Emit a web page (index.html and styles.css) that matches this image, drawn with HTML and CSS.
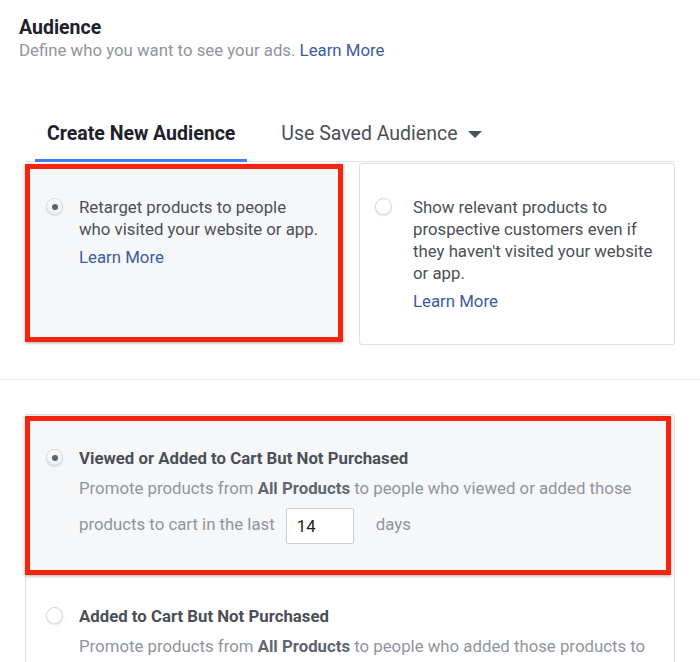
FILE: index.html
```html
<!DOCTYPE html>
<html lang="en">
<head>
<meta charset="utf-8">
<title>Audience</title>
<link rel="stylesheet" href="styles.css">
</head>
<body>
<header class="header">
  <h1 class="title">Audience</h1>
  <p class="subtitle">Define who you want to see your ads. <a class="link" href="#">Learn More</a></p>
</header>

<nav class="tabs">
  <div class="tab tab-active">Create New Audience</div>
  <div class="tab">Use Saved Audience <span class="caret"></span></div>
</nav>

<div class="cards">
  <div class="card card-selected">
    <span class="radio radio-on"></span>
    <div class="card-text">
      <p>Retarget products to people who visited your website or app.</p>
      <a class="link card-link" href="#">Learn More</a>
    </div>
  </div>
  <div class="card card-plain">
    <span class="radio"></span>
    <div class="card-text">
      <p>Show relevant products to prospective customers even if they haven't visited your website or app.</p>
      <a class="link card-link" href="#">Learn More</a>
    </div>
  </div>
</div>

<hr class="separator">

<div class="list">
  <div class="item item-selected">
    <span class="radio radio-on"></span>
    <div class="item-body">
      <div class="item-title">Viewed or Added to Cart But Not Purchased</div>
      <p class="item-desc">Promote products from <b>All Products</b> to people who viewed or added those products to cart in the last<span class="days-input">14</span>days</p>
    </div>
  </div>
  <div class="item item-plain">
    <span class="radio"></span>
    <div class="item-body">
      <div class="item-title">Added to Cart But Not Purchased</div>
      <p class="item-desc">Promote products from <b>All Products</b> to people who added those products to cart in the last<span class="days-input">14</span>days</p>
    </div>
  </div>
</div>
</body>
</html>
```

FILE: styles.css
```css
* { box-sizing: border-box; }

html, body {
  margin: 0;
  padding: 0;
  background: #ffffff;
  height: 662px;
  overflow: hidden;
}

body {
  font-family: Roboto, "Liberation Sans", Arial, sans-serif;
  color: #4b4f56;
  font-size: 16.8px;
}

p { margin: 0; }

.link {
  color: #3b5ca0;
  text-decoration: none;
}

.header {
  padding: 16px 19px 0;
}

.title {
  margin: 0;
  font-size: 19.5px;
  line-height: 24px;
  font-weight: 700;
  color: #1d2129;
}

.subtitle {
  margin-top: -1px;
  font-size: 16.8px;
  line-height: 22px;
  color: #90949c;
}

.tabs {
  display: flex;
  gap: 22px;
  margin: 45px 25px 0;
  padding-left: 10px;
  border-bottom: 1px solid #e2e4e8;
}

.tab {
  display: flex;
  align-items: center;
  padding: 17px 12px 14px;
  line-height: 22px;
  font-size: 19.5px;
  color: #4b4f56;
  border-bottom: 3px solid transparent;
  margin-bottom: -1px;
}

.tab-active {
  font-weight: 700;
  color: #1d2129;
  border-bottom-color: #4080ec;
}

.caret {
  display: inline-block;
  width: 0;
  height: 0;
  margin-left: 10px;
  border-left: 7px solid transparent;
  border-right: 7px solid transparent;
  border-top: 7px solid #4b4f56;
}

.cards {
  display: flex;
  gap: 16px;
  margin: 1px 25px 0;
}

.card {
  display: flex;
  align-items: flex-start;
  border-radius: 3px;
  line-height: 22px;
}

.card-selected {
  width: 318px;
  margin: 1px 0 3px;
  background: #f6f7f8;
  border: 5px solid #f5240e;
  border-radius: 0;
  box-shadow: 0 1px 3px rgba(0, 0, 0, 0.35);
  padding: 27px 19px 20px 16px;
  gap: 16px;
}

.card-plain {
  width: 316px;
  background: #ffffff;
  border: 1px solid #dddfe2;
  padding: 32px 12px 32px 15px;
  gap: 21px;
}

.card-text p {
  color: #4b4f56;
}

.card-link {
  display: block;
  margin-top: 6px;
}

.radio {
  flex: none;
  position: relative;
  width: 17px;
  height: 17px;
  margin-top: 2px;
  border-radius: 50%;
  background: #ffffff;
  border: 1px solid #d6d8dc;
  box-shadow: 0 1px 2px rgba(0, 0, 0, 0.12);
}

.radio-on {
  background: linear-gradient(#fbfbfb, #eceef1);
}

.radio-on::after {
  content: "";
  position: absolute;
  left: 50%;
  top: 50%;
  width: 6px;
  height: 6px;
  margin: -3px 0 0 -3px;
  border-radius: 50%;
  background: #5d6169;
}

.separator {
  margin: 34px 0 0;
  border: 0;
  border-top: 1px solid #e9eaed;
  height: 0;
}

.list {
  margin: 34px 25px 0;
  border: 1px solid #dddfe2;
  border-bottom: 0;
  border-radius: 3px 3px 0 0;
  height: 300px;
}

.item {
  display: flex;
  align-items: flex-start;
}

.item-selected {
  margin: 1px 3px 0 -1px;
  background: #f6f7f8;
  border: 5px solid #f5240e;
  box-shadow: 0 1px 3px rgba(0, 0, 0, 0.35);
  padding: 26px 20px 26px 16px;
  gap: 16px;
}

.item-plain {
  padding: 30px 20px 20px 20px;
  gap: 16px;
}

.item-title {
  font-weight: 700;
  line-height: 22px;
  color: #4b4f56;
}

.item-desc {
  margin-top: 1px;
  line-height: 36px;
  color: #90949c;
}

.item-desc b {
  color: #606770;
  font-weight: 700;
}

.days-input {
  display: inline-block;
  vertical-align: middle;
  width: 68px;
  height: 36px;
  margin: 0 22px 0 11px;
  padding: 0 10px;
  line-height: 34px;
  background: #ffffff;
  border: 1px solid #ccd0d5;
  border-radius: 2px;
  color: #1d2129;
}
```
